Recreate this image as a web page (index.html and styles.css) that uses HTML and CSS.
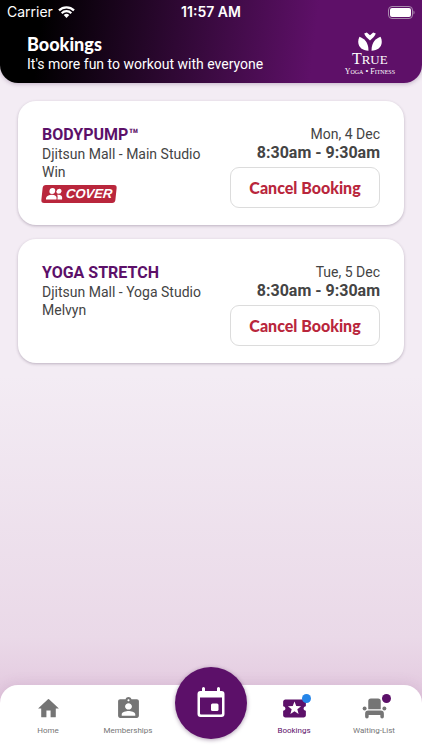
FILE: index.html
```html
<!DOCTYPE html>
<html lang="en">
<head>
<meta charset="utf-8">
<meta name="viewport" content="width=device-width, initial-scale=1">
<title>Bookings</title>
<link rel="stylesheet" href="styles.css">
</head>
<body>
<header class="header">
  <div class="status">
    <div class="carrier">
      <span>Carrier</span>
      <svg class="wifi" viewBox="0 0 17 12" aria-hidden="true"><g fill="none" stroke="#fff" stroke-width="2.2"><path d="M1 4.4a10.6 10.6 0 0 1 15 0"/><path d="M3.7 7.2a6.8 6.8 0 0 1 9.6 0"/></g><path d="M8.5 12 5.7 9.1a4 4 0 0 1 5.6 0z" fill="#fff"/></svg>
    </div>
    <time class="clock">11:57 AM</time>
    <svg class="battery" viewBox="0 0 27 13" aria-hidden="true"><rect x=".5" y=".5" width="24" height="12" rx="3.5" fill="none" stroke="#a98aae"/><rect x="2" y="2" width="21" height="9" rx="2" fill="#fff"/><path d="M25.5 4.5c1.400.5 1.400 3.500 0 4z" fill="#a98aae"/></svg>
  </div>
  <div class="masthead">
    <div>
      <h1 class="title">Bookings</h1>
      <p class="tagline">It's more fun to workout with everyone</p>
    </div>
    <div class="brand">
      <svg class="brand-mark" viewBox="0 0 24 18" aria-hidden="true"><g fill="#fff"><path d="M2 4.500C6.500 6 10.800 10 10.500 17.800C3.500 17.800-1.500 12 2 4.500z"/><path d="M22 4.500C17.500 6 13.200 10 13.500 17.800C20.500 17.800 25.500 12 22 4.500z"/><path d="M6.500 1.500 9 .5 12 3 15 .5 17.500 1.500C16.500 4 14.500 6 12 8C9.500 6 7.500 4 6.500 1.500z"/></g></svg>
      <span class="brand-name">T<small>RUE</small></span>
      <span class="brand-sub">Y<small>OGA</small> • F<small>ITNESS</small></span>
    </div>
  </div>
</header>

<main class="list">
  <article class="card">
    <div>
      <h2 class="class-name">BODYPUMP™</h2>
      <p class="detail">Djitsun Mall - Main Studio</p>
      <p class="detail">Win</p>
      <span class="cover">
        <svg class="people" viewBox="0 0 17 12" aria-hidden="true"><g fill="#fff"><circle cx="6" cy="3" r="2.900"/><circle cx="12.700" cy="3.300" r="2.500"/><path d="M.5 11.500V10c0-2 2.500-3.300 5.500-3.300s5 1.300 5 3.300v1.500z"/><path d="M12 11.500h4.700V10c0-2-1.700-3.300-4.200-3.300-.5 0-1 0-1.300.1.600.8.800 1.700.8 3.200z"/></g></svg>
        <span>COVER</span>
      </span>
    </div>
    <div class="slot">
      <p class="date">Mon, 4 Dec</p>
      <p class="time">8:30am - 9:30am</p>
      <button class="cancel" type="button">Cancel Booking</button>
    </div>
  </article>
  <article class="card">
    <div>
      <h2 class="class-name">YOGA STRETCH</h2>
      <p class="detail">Djitsun Mall - Yoga Studio</p>
      <p class="detail">Melvyn</p>
    </div>
    <div class="slot">
      <p class="date">Tue, 5 Dec</p>
      <p class="time">8:30am - 9:30am</p>
      <button class="cancel" type="button">Cancel Booking</button>
    </div>
  </article>
</main>

<nav class="tabs" aria-label="Main">
  <a class="tab" href="#home">
    <svg class="icon" viewBox="0 0 24 24" aria-hidden="true"><path d="M10 20.500v-6.500h4v6.500h4.500q.5 0 .5-.5v-8h3L12.500 3q-.5-.4-1 0L2 12h3v8q0 .5.5.5z"/></svg>
    <span>Home</span>
  </a>
  <a class="tab" href="#memberships">
    <svg class="icon" viewBox="0 0 24 24" aria-hidden="true"><path d="M20 3h-5.180C14.400 1.840 13.300 1 12 1s-2.400.84-2.820 2H4c-1.100 0-2 .9-2 2v14c0 1.100.9 2 2 2h16c1.100 0 2-.9 2-2V5c0-1.100-.9-2-2-2zm-8 0c.55 0 1 .45 1 1s-.45 1-1 1-1-.45-1-1 .45-1 1-1zm0 4c1.660 0 3.300 1.340 3.300 3s-1.640 3-3.300 3-3.300-1.340-3.300-3 1.640-3 3.300-3zm6.500 12h-13v-1.400c0-2 4.300-3.100 6.500-3.100s6.500 1.100 6.500 3.100z"/></svg>
    <span>Memberships</span>
  </a>
  <a class="schedule" href="#schedule" aria-label="Schedule">
    <svg class="calendar" viewBox="0 0 30 34" aria-hidden="true"><path fill-rule="evenodd" d="M6 2.500a1.500 1.500 0 0 1 3 0V5h12V2.500a1.500 1.500 0 0 1 3 0V5h1.500a3 3 0 0 1 3 3v20a3 3 0 0 1-3 3h-21a3 3 0 0 1-3-3V8a3 3 0 0 1 3-3H6zM4 11.500v16a1 1 0 0 0 1 1h20a1 1 0 0 0 1-1V11.500z"/><rect x="15" y="17.500" width="7.500" height="7.500" rx="1.500"/></svg>
  </a>
  <a class="tab active" href="#bookings" aria-current="page">
    <span class="badged">
      <svg class="icon" viewBox="1 1 22 22" aria-hidden="true"><path d="M20 12c0-1.100.9-2 2-2V6c0-1.100-.9-2-2-2H4c-1.100 0-1.990.9-1.990 2v4c1.100 0 1.990.9 1.990 2s-.89 2-2 2v4c0 1.100.9 2 2 2h16c1.100 0 2-.9 2-2v-4c-1.100 0-2-.9-2-2zm-4.420 4.800L12 14.500l-3.580 2.300 1.080-4.120-3.290-2.690 4.240-.25L12 5.800l1.540 3.950 4.240.25-3.290 2.690 1.090 4.110z"/></svg>
      <i class="dot dot-blue"></i>
    </span>
    <span>Bookings</span>
  </a>
  <a class="tab" href="#waiting-list">
    <span class="badged">
      <svg class="icon" viewBox="0 0 24 24" aria-hidden="true"><path d="M3 20v-3a3 3 0 0 1 3-3h12a3 3 0 0 1 3 3v3q0 1.500-1.700 1.500T17.600 20v-1.800H6.400V20q0 1.500-1.700 1.500T3 20zM18 12.700H6V5a2.500 2.500 0 0 1 2.500-2.500h7A2.500 2.500 0 0 1 18 5z"/><circle cx="2.500" cy="12" r="1.900"/><circle cx="21.500" cy="12" r="1.900"/></svg>
      <i class="dot dot-purple"></i>
    </span>
    <span>Waiting-List</span>
  </a>
</nav>
</body>
</html>
```
FILE: styles.css
```css
* { box-sizing: border-box; }

body {
  margin: 0;
  min-height: 100vh;
  display: flex;
  flex-direction: column;
  font-family: Roboto, "Liberation Sans", sans-serif;
  color: #444;
  background: linear-gradient(#f3ecf4 0%, #f3ecf4 50%, #ead9e8 85%, #e3c9df 93%);
}

h1, h2, p { margin: 0; }

.header {
  padding-bottom: 7px;
  color: #fff;
  background: linear-gradient(97deg, #000 10%, #5e1068 74%);
  border-radius: 0 0 18px 18px;
  box-shadow: 0 1px 4px rgba(80, 40, 90, 0.3);
}

.status {
  display: grid;
  grid-template-columns: 1fr auto 1fr;
  align-items: center;
  height: 24px;
  padding: 0 7px;
  font: 14px/20px Inter, sans-serif;
}

.carrier { display: flex; align-items: center; gap: 5px; }
.wifi { width: 17px; height: 12px; }
.clock { font-weight: 600; }
.battery { width: 27px; height: 13px; justify-self: end; }

.masthead {
  display: flex;
  justify-content: space-between;
  align-items: flex-start;
  padding: 8px 27px 0;
}

.title { padding-top: 2px; font: 900 18px/20px Lato, sans-serif; }
.tagline { font-size: 14px; line-height: 20px; }

.brand {
  display: flex;
  flex-direction: column;
  align-items: center;
  font-family: "Liberation Serif", serif;
}

.brand-mark { width: 26px; height: 19px; }
.brand-name { font-size: 16px; line-height: 16px; }
.brand-name small { font-size: 13px; }
.brand-sub { font-size: 8px; line-height: 8px; }
.brand-sub small { font-size: 6px; }

.list {
  flex: 1;
  display: flex;
  flex-direction: column;
  gap: 14px;
  padding: 18px;
}

.card {
  display: flex;
  justify-content: space-between;
  min-height: 124px;
  padding: 24px 24px 16px;
  background: #fff;
  border-radius: 18px;
  box-shadow: 0 1px 3px rgba(60, 40, 70, 0.3);
}

.class-name { font-size: 16px; line-height: 20px; color: #5c1069; }
.detail { font-size: 14px; line-height: 18px; }

.cover {
  display: inline-flex;
  align-items: center;
  gap: 3px;
  height: 18px;
  margin-top: 4px;
  padding: 0 4px;
  font: italic bold 13px/18px "Liberation Sans", sans-serif;
  color: #fff;
  background: #b9263c;
  border-radius: 3px;
  transform: skewX(-6deg);
}

.people { width: 17px; height: 12px; }

.slot {
  display: flex;
  flex-direction: column;
  align-items: flex-end;
  text-align: right;
}

.date { font-size: 14px; line-height: 18px; }
.time { font-size: 16px; line-height: 20px; font-weight: bold; }

.cancel {
  width: 150px;
  height: 41px;
  margin-top: 4px;
  padding: 0;
  font: 900 16px/20px Lato, sans-serif;
  color: #b9263c;
  background: #fff;
  border: 1px solid #dcdcdc;
  border-radius: 9px;
}

.tabs {
  display: grid;
  grid-template-columns: 1fr 1fr 86px 1fr 1fr;
  height: 65px;
  padding: 0 8px;
  background: #fff;
  border-radius: 18px 18px 0 0;
  box-shadow: 0 0 14px rgba(120, 60, 120, 0.15);
}

.tab {
  display: flex;
  flex-direction: column;
  align-items: center;
  gap: 4px;
  padding-top: 11px;
  font-size: 8px;
  line-height: 12px;
  color: #757575;
  text-decoration: none;
}

.tab.active { color: #5c1069; }
.icon { display: block; width: 25px; height: 25px; fill: currentColor; }
.badged { position: relative; }

.dot {
  position: absolute;
  top: -2px;
  right: -4px;
  width: 9px;
  height: 9px;
  border-radius: 50%;
}

.dot-blue { background: #2585e8; }
.dot-purple { background: #5c1069; }

.schedule {
  display: flex;
  align-items: center;
  justify-content: center;
  justify-self: center;
  width: 72px;
  height: 72px;
  margin-top: -18px;
  background: #5c1069;
  border-radius: 50%;
  box-shadow: 0 1px 4px rgba(60, 20, 70, 0.4);
}

.calendar { width: 30px; height: 34px; fill: #fff; }
```
